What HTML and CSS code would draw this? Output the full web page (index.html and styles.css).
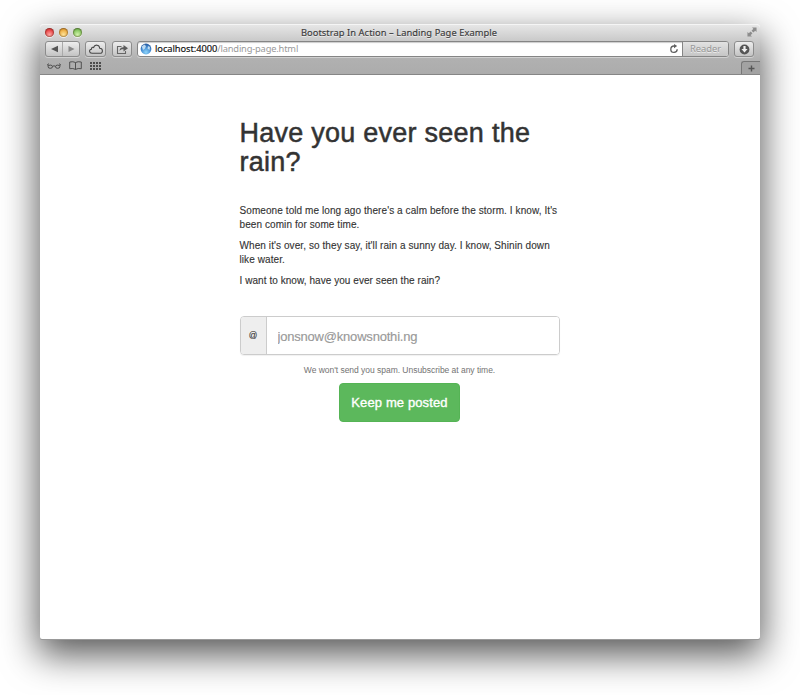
FILE: index.html
```html
<!DOCTYPE html>
<html lang="en">
<head>
<meta charset="utf-8">
<title>Bootstrap In Action – Landing Page Example</title>
<link rel="stylesheet" href="styles.css">
</head>
<body>
<div class="window">
  <header class="chrome">
    <div class="titlebar">
      <div class="lights"><i class="light red"></i><i class="light amber"></i><i class="light green"></i></div>
      <div class="title"><span>Bootstrap In Action – Landing Page Example</span></div>
      <svg class="expand" width="10" height="10" viewBox="0 0 11 11"><path d="M5.500.5h5v5L9 4 7 6 5 4l2-2zM.5 5.500l1.500 1.500 2-2 2 2-2 2 1.500 1.500h-5z" fill="#8c8c8c"/></svg>
    </div>
    <div class="toolbar">
      <div class="btn nav">
        <svg width="33" height="14" viewBox="0 0 33 14"><path d="M5 7l7-3.200v6.400z" fill="#555"/><path d="M16.500 0v14" stroke="#aaa"/><path d="M28.500 7l-6-3v6z" fill="#888"/></svg>
      </div>
      <div class="btn cloud"><svg width="16" height="12" viewBox="0 0 16 12"><path d="M4 10.300C1 10.300.7 6.700 3.400 6.200 3.500 4.500 4.700 4 5.600 4.500 6.700 1 11.500 1.600 11.700 5.300c3.500.1 3.600 5 .4 5z" fill="none" stroke="#484848" stroke-width="1.100"/></svg></div>
      <div class="btn share"><svg width="12" height="11" viewBox="0 0 12 11"><path d="M5.500 2.500h-4v7h8V7" fill="none" stroke="#666" stroke-width="1.100"/><path d="M3.500 7C3.800 4.200 5 3.200 7.500 3.200V1L12 4.300 7.500 7.500V5.300C5.500 5.200 4.500 5.600 3.500 7z" fill="#5c5c5c"/></svg></div>
      <div class="address">
        <svg class="globe" width="12" height="12" viewBox="0 0 12 12"><defs><radialGradient id="g" cx=".5" cy=".8" r=".8"><stop offset="0" stop-color="#8ed5fa"/><stop offset=".6" stop-color="#4188d0"/><stop offset="1" stop-color="#28599c"/></radialGradient></defs><circle cx="6" cy="6" r="5.400" fill="url(#g)"/><path d="M1.800 3.500l2.500-2L6 3 5 5.500 3 7zM8 3l2 1-.5 3-2-1.500z" fill="#dbf0fc" opacity=".8"/></svg>
        <span class="host">localhost:4000</span><span class="path">/landing-page.html</span>
        <svg class="reload" width="10" height="10" viewBox="0 0 10 10"><path d="M8.200 5.300A3.200 3.200 0 1 1 5 2h1" fill="none" stroke="#606060" stroke-width="1.300"/><path d="M5 0l3.200 2.100L5 4.200z" fill="#606060"/></svg>
        <div class="reader"><span>Reader</span></div>
      </div>
      <div class="btn download"><svg width="11" height="11" viewBox="0 0 11 11"><circle cx="5.500" cy="5.500" r="4.900" fill="#555"/><path d="M4.400 2h2.200v3h2L5.500 8.600 2.400 5h2z" fill="#f0f0f0"/></svg></div>
    </div>
    <div class="bookmarks">
      <svg width="14" height="8" viewBox="0 0 14 8"><g fill="none" stroke="#4c4c4c"><ellipse cx="3.300" cy="4.700" rx="2.200" ry="1.600"/><ellipse cx="10.700" cy="4.700" rx="2.200" ry="1.600"/><path d="M5.500 4.300q1.500-1 3 0M1.300 4L.5 2.500l1.500-.7M12.700 4l.8-1.500-1.500-.7"/></g></svg>
      <svg class="book" width="13" height="9" viewBox="0 0 13 9"><path d="M6.500 1.500Q4 .2.700 1v6.700q3.300-.7 5.800.7 2.500-1.400 5.800-.7V1Q9 .2 6.500 1.500zv7" fill="none" stroke="#505050"/></svg>
      <svg class="tiles" width="11" height="8" viewBox="0 0 11 8"><path d="M0 1h11M0 4h11M0 7h11" stroke="#4c4c4c" stroke-width="2" stroke-dasharray="2 1"/></svg>
      <div class="newtab"><svg width="7" height="7" viewBox="0 0 7 7"><path d="M3.500 .5v6M.5 3.500h6" stroke="#555" stroke-width="1.400"/></svg></div>
    </div>
  </header>
  <main class="page">
    <h1>Have you ever seen the<br>rain?</h1>
    <p>Someone told me long ago there's a calm before the storm. I know, It's<br>been comin for some time.</p>
    <p>When it's over, so they say, it'll rain a sunny day. I know, Shinin down<br>like water.</p>
    <p class="last">I want to know, have you ever seen the rain?</p>
    <form>
      <div class="group"><span class="addon">@</span><input type="email" placeholder="jonsnow@knowsnothi.ng"></div>
      <div class="help">We won't send you spam. Unsubscribe at any time.</div>
      <button type="button">Keep me posted</button>
    </form>
  </main>
</div>
</body>
</html>
```
FILE: styles.css
```css
* { box-sizing: border-box; }
body { margin: 0; height: 695px; overflow: hidden; background: #fff; font-family: "Liberation Sans", Arial, sans-serif; }
svg { display: block; flex: none; }
.window { width: 720px; height: 615px; margin: 24px 40px 0; border-radius: 4px 4px 2px 2px; background: #fff; box-shadow: 0 1px 0 #999, 0 14px 36px 2px rgba(0,0,0,.66); }
.chrome { height: 51px; border-radius: 4px 4px 0 0; border-top: 1px solid #f5f5f5; border-bottom: 1px solid #868686; background: linear-gradient(#e6e6e6, #cbcbcb 15px, #b0b0b0 35px, #acacac); font-family: "Noto Sans", sans-serif; }
.titlebar { height: 16px; display: flex; justify-content: space-between; padding: 2px 3px 0 5px; }
.lights { display: flex; gap: 5px; padding-top: 1px; width: 60px; }
.light { width: 9px; height: 9px; border-radius: 50%; box-shadow: inset 0 0 1px 1px rgba(50,30,10,.35), 0 1px 0 #eee; }
.red { background: radial-gradient(circle at 50% 75%, #ffaaa5, #e94245 60%, #a62f31); }
.amber { background: radial-gradient(circle at 50% 75%, #ffe59c, #edac40 60%, #a97027); }
.green { background: radial-gradient(circle at 50% 75%, #d5f5ae, #83c55d 60%, #477f34); }
.title { font-size: 9.300px; line-height: 12px; color: #3b3b3b; -webkit-text-stroke: .15px #3b3b3b; white-space: nowrap; text-shadow: 0 1px 0 #eee; }
.title span { letter-spacing: .07px; margin-right: 4px; }
.expand { margin-left: 50px; }
.toolbar { height: 16px; display: flex; padding: 0 6px 0 5px; }
.btn { height: 16px; border: 1px solid #8c8c8c; border-radius: 3px; background: linear-gradient(#ededed, #c3c3c3); box-shadow: 0 1px 0 #d0d0d0; display: flex; align-items: center; justify-content: center; }
.nav { width: 35px; }
.cloud { width: 21px; margin-left: 5px; }
.share { width: 20px; margin-left: 6px; }
.address { flex: 1; margin: 0 5px; height: 16px; border: 1px solid #858585; border-radius: 3px; background: #fff; box-shadow: inset 0 1px 1px #ccc, 0 1px 0 #d0d0d0; display: flex; align-items: center; padding-left: 2px; font-size: 9.300px; line-height: 14px; overflow: hidden; }
.globe { margin-right: 3px; }
.host { color: #111; -webkit-text-stroke: .15px #111; letter-spacing: -.06px; }
.path { color: #999; letter-spacing: -.17px; }
.reload { margin-left: auto; }
.reader { width: 46px; height: 14px; margin-left: 3px; border-left: 1px solid #858585; background: linear-gradient(#e2e2e2, #c5c5c5); color: #979797; text-align: center; text-shadow: 0 1px 0 #eee; }
.download { width: 20px; }
.bookmarks { height: 17px; display: flex; align-items: center; padding-left: 7px; }
.book { margin-left: 8px; }
.tiles { margin-left: 8px; }
.newtab { width: 19px; height: 13px; margin: 4px 0 0 auto; border: 1px solid #777; border-width: 1px 0 0 1px; border-radius: 3px 0 0; background: #a2a2a2; display: flex; align-items: center; justify-content: center; }
.page { width: 321px; margin: 0 0 0 199.500px; padding-top: 44px; color: #333; }
h1 { margin: 0 0 27px; font-size: 27px; line-height: 29px; font-weight: 400; letter-spacing: .25px; white-space: nowrap; -webkit-text-stroke: .5px #333; }
p { margin: 0 0 7px; font-size: 10px; line-height: 14px; letter-spacing: .085px; white-space: nowrap; -webkit-text-stroke: .12px #333; }
.last { letter-spacing: .06px; }
form { width: 320px; margin-top: 28px; display: flex; flex-direction: column; align-items: center; }
.group { width: 320px; height: 39px; display: flex; border: 1px solid #ccc; border-radius: 4px; box-shadow: 0 1px 1px rgba(0,0,0,.06); overflow: hidden; }
.addon { width: 26px; border-right: 1px solid #ccc; background: #eee; font-size: 8.500px; line-height: 37px; text-align: center; -webkit-text-stroke: .1px #333; }
input { flex: 1; border: 0; outline: 0; padding: 2px 11px 0; font: 13px "Liberation Sans", Arial, sans-serif; letter-spacing: -.2px; background: #fff; }
input::placeholder { color: #999; opacity: 1; -webkit-text-stroke: .15px #999; }
.help { margin-top: 9px; font-size: 8.500px; line-height: 12px; letter-spacing: -.03px; color: #737373; white-space: nowrap; }
button { margin-top: 7px; width: 121px; height: 39px; padding: 0; border: 1px solid #55b455; border-radius: 4px; background: #5cb85c; color: #fff; font: 13px "Liberation Sans", Arial, sans-serif; letter-spacing: .12px; -webkit-text-stroke: .35px #fff; }
```
